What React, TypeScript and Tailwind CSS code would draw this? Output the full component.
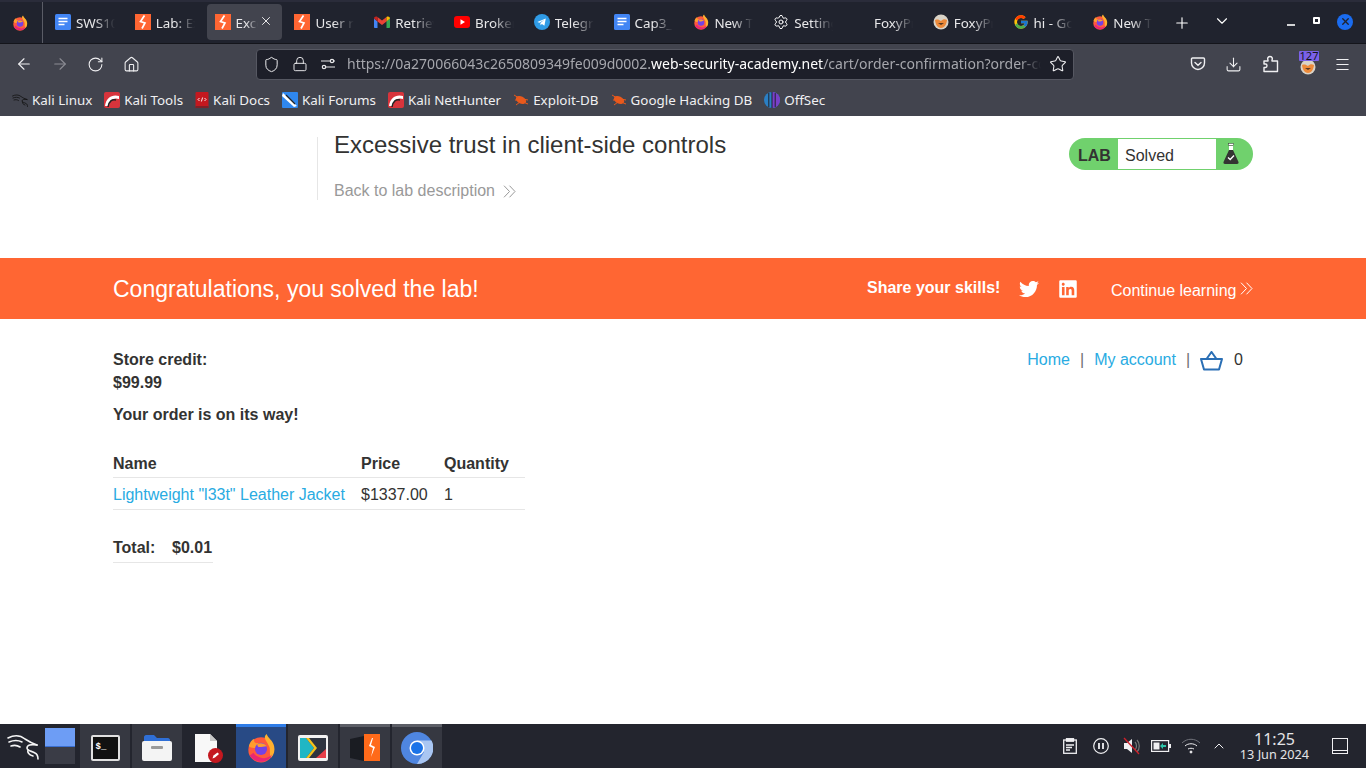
import React from "react";
import { ArrowLeft, ArrowRight, ChevronDown, ChevronUp, Download, House, Lock, Menu, Plus, RotateCw, Settings, Shield, Star, X } from "lucide-react";
import { FaLinkedin, FaTwitter } from "react-icons/fa";
import { FcGoogle } from "react-icons/fc";

function FirefoxLogo({ size = 16 }: { size?: number }) {
  return (
    <svg width={size} height={size} viewBox="0 0 32 32">
      <circle cx="16" cy="18" r="13.5" fill="#ff5a3c" />
      <path d="M22 1c1 4 7 7 8 13 1 4 0 9-3 12-3-3 0-9-3-13-1-3-4-6-4-8 0-2 1-3 2-4z" fill="#ffb02e" />
      <path d="M3 14c1-4 3-7 6-8-1 3 0 4 2 5 3-1 7 0 9 3-3 0-5 2-9 2-3 0-6 0-8-2z" fill="#ff9d2e" />
      <path d="M4 24c3 5 10 8 16 6 4-1 7-4 8-7-3 3-8 5-13 3-4-1-6-3-7-5l-4 3z" fill="#e31587" opacity="0.75" />
      <circle cx="16" cy="17" r="6.5" fill="#7542e5" />
      <path d="M12 12c3-2 8-1 10 2-3 0-5 1-8 1-1 0-2-1-2-3z" fill="#ff9d2e" />
    </svg>
  );
}

function DocIcon() {
  return (
    <svg width="16" height="16" viewBox="0 0 16 16">
      <rect width="16" height="16" rx="1.5" fill="#4285f4" />
      <path d="M3.5 4.5h9M3.5 7.5h9M3.5 10.5h6" stroke="#fff" strokeWidth="1.5" />
    </svg>
  );
}

function BurpIcon() {
  return (
    <svg width="16" height="16" viewBox="0 0 16 16">
      <rect width="16" height="16" fill="#ff6633" />
      <path d="M9.5 1.5 5.500 7.500 10 9 7 14.500" stroke="#fff" strokeWidth="1.700" fill="none" />
    </svg>
  );
}

function GmailIcon() {
  return (
    <svg width="16" height="14" viewBox="0 0 16 12">
      <path d="M0 2.5v8.5c0 .5.4 1 1 1h2.5V5.500z" fill="#4285f4" />
      <path d="M12.5 5.500V12H15c.6 0 1-.5 1-1V2.500z" fill="#34a853" />
      <path d="M3.500 5.500V1L8 4.500 12.500 1v4.500L8 9z" fill="#ea4335" />
      <path d="M0 2.500C0 .7 2 0 3.500 1v4.500z" fill="#c5221f" />
      <path d="M12.500 1C14 0 16 .7 16 2.500l-3.500 3z" fill="#fbbc04" />
    </svg>
  );
}

function YoutubeIcon() {
  return (
    <svg width="16" height="12" viewBox="0 0 16 12">
      <rect width="16" height="12" rx="3" fill="#f00" />
      <path d="M6.500 3.300v5.400L11 6z" fill="#fff" />
    </svg>
  );
}

function TelegramIcon() {
  return (
    <svg width="16" height="16" viewBox="0 0 16 16">
      <circle cx="8" cy="8" r="8" fill="#2f9be6" />
      <path d="M3.300 8 11.800 4.600 10.400 11.800 7.900 10l-1.300 1.300-.2-2.200 4-3.400-5 3z" fill="#fff" />
    </svg>
  );
}

function FoxyIcon({ size = 16 }: { size?: number }) {
  return (
    <svg width={size} height={size} viewBox="0 0 16 16">
      <circle cx="8" cy="8" r="7.500" fill="#d9d3c7" />
      <path d="M2 6c3-1 4 0 6 1 2-2 4-2 6-1-.5 5-3 8-6 8s-5.500-3-6-8z" fill="#ed8a3a" />
      <path d="M5 9h6l-3 2z" fill="#5a3a22" />
    </svg>
  );
}

function Tab({ icon, label, active }: { icon?: React.ReactNode; label: string; active?: boolean }) {
  return (
    <div className="w-[79.8px] shrink-0 h-full px-[2px] pt-[2px] pb-[3px]">
      <div className={"h-full pl-2 pr-[6px] flex items-center gap-[5px] rounded " + (active ? "bg-[#42444e]" : "")}>
        <span className="w-4 h-4 shrink-0 flex items-center justify-center">{icon}</span>
        <span className={"pt-[2px] overflow-hidden whitespace-nowrap text-[13.4px] text-[#e8e8ea] [mask-image:linear-gradient(to_right,#000_45%,transparent_95%)] " + (active ? "w-[23px] shrink-0" : "flex-1")}>
          {label}
        </span>
        {active && <X size={14} strokeWidth={1.5} className="text-white shrink-0 -ml-[5px] -mt-0.5" />}
      </div>
    </div>
  );
}

function TabBar() {
  return (
    <div className="h-11 bg-[#20232e] flex border-b border-[#14151b] border-t-2 border-t-[#2a2c3a]">
      <div className="w-[43px] h-full flex items-center justify-center pr-[2px] border-r border-[#5a5c66] shrink-0">
        <FirefoxLogo />
      </div>
      <div className="flex pl-[2px] h-full">
        <Tab icon={<DocIcon />} label="SWS10" />
        <Tab icon={<BurpIcon />} label="Lab: Exc" />
        <Tab icon={<BurpIcon />} label="Excessive" active />
        <Tab icon={<BurpIcon />} label="User role" />
        <Tab icon={<GmailIcon />} label="Retrieve" />
        <Tab icon={<YoutubeIcon />} label="Broken" />
        <Tab icon={<TelegramIcon />} label="Telegram" />
        <Tab icon={<DocIcon />} label="Cap3_" />
        <Tab icon={<FirefoxLogo />} label="New Tab" />
        <Tab icon={<Settings size={16} strokeWidth={1.5} className="text-white" />} label="Settings" />
        <Tab label="FoxyProxy" />
        <Tab icon={<FoxyIcon />} label="FoxyProxy" />
        <Tab icon={<FcGoogle size={16} />} label="hi - Google" />
        <Tab icon={<FirefoxLogo />} label="New Tab" />
      </div>
      <div className="flex items-center pl-[11px] text-white">
        <Plus size={18} strokeWidth={1.5} />
        <ChevronDown size={18} strokeWidth={1.5} className="ml-[22px] -mt-1" />
        <span className="h-[2px] bg-white/80 ml-[56px] mt-1 w-2" />
        <span className="w-[7px] h-[7px] border-2 border-white rounded-[1px] ml-[18px] -mt-1" />
        <span className="w-4 h-4 rounded-full bg-[#1a6cf0] ml-[17px] -mt-0.5 flex items-center justify-center">
          <X size={11} strokeWidth={3} className="text-[#20232e]" />
        </span>
      </div>
    </div>
  );
}

function PocketIcon() {
  return (
    <svg width="16" height="16" viewBox="0 0 16 16" fill="none" stroke="#f0f0f2" strokeWidth="1.400">
      <path d="M2.500 2h11c.6 0 1 .4 1 1v4c0 3.500-3 6.500-6.500 6.500S1.500 10.500 1.500 7V3c0-.6.4-1 1-1z" />
      <path d="M5 6.500 8 9.200l3-2.700" strokeLinecap="round" />
    </svg>
  );
}

function PuzzleIcon() {
  return (
    <svg width="16" height="18" viewBox="0 0 16 18" fill="none" stroke="#f0f0f2" strokeWidth="1.400" strokeLinejoin="round">
      <path d="M1 6h4V5c-1-2 .5-3.500 2-3.500S10 3 9 5v1h5.500v10.500H1v-4h1.500c2 0 2-3.500 0-3.500H1z" />
    </svg>
  );
}

function SliderIcon() {
  return (
    <svg width="16" height="16" viewBox="0 0 16 16" fill="none" stroke="#e8e8ea" strokeWidth="1.200">
      <circle cx="12" cy="5" r="1.700" />
      <circle cx="4" cy="11" r="1.700" />
      <path d="M1 5h9M14 5h1M6 11h9" />
    </svg>
  );
}

function NavBar() {
  return (
    <div className="h-10 bg-[#42444e] flex items-center text-[#f0f0f2]">
      <div className="w-[256px] flex items-center pl-[15px] shrink-0">
        <ArrowLeft size={18} strokeWidth={1.5} />
        <ArrowRight size={18} strokeWidth={1.5} className="ml-[18px] text-[#8b8c93]" />
        <RotateCw size={17} strokeWidth={1.5} className="ml-[18px]" />
        <House size={17} strokeWidth={1.5} className="ml-[19px]" />
      </div>
      <div className="w-[818px] h-[31px] shrink-0 bg-[#1d1f29] border border-[#565862] rounded flex items-center pl-[6px] pr-[6px]">
        <Shield size={17} strokeWidth={1.4} />
        <Lock size={16} strokeWidth={1.4} className="ml-[12px]" />
        <span className="ml-[12px] shrink-0"><SliderIcon /></span>
        <span className="ml-[11px] pb-[2px] flex-1 overflow-hidden whitespace-nowrap text-[14px] text-[#a6a7ad] [mask-image:linear-gradient(to_right,#000_97%,transparent_100%)]">
          https://0a270066043c2650809349fe009d0002.<span className="text-white">web-security-academy.net</span>/cart/order-confirmation?order-confirmed=true
        </span>
        <Star size={18} strokeWidth={1.4} className="ml-2 shrink-0" />
      </div>
      <div className="flex items-center ml-[116px]">
        <PocketIcon />
        <Download size={17} strokeWidth={1.5} className="ml-[19px]" />
        <span className="ml-[21px]"><PuzzleIcon /></span>
        <span className="ml-[21px] relative w-4 h-4 mt-[6px]">
          <FoxyIcon />
          <span className="absolute -top-[8px] -left-[1px] w-5 h-[10px] bg-[#7b61e8] rounded-[1px] text-[11px] leading-[10px] text-center text-[#14151b]">127</span>
        </span>
        <Menu size={17} strokeWidth={1.5} className="ml-[18px]" />
      </div>
    </div>
  );
}

function KaliMark({ size = 16, color = "#111" }: { size?: number; color?: string }) {
  return (
    <svg width={size} height={size} viewBox="0 0 32 32" fill="none" stroke={color} strokeWidth="1.600" strokeLinecap="round">
      <path d="M1 8C7 5 13 5 18 9c3 2 6 4 12 6" />
      <path d="M2 12c5-2 9-2 13 0M4 16c3-1 6-1 9 1" />
      <path d="M30 15c-6-1-10 0-10 3 0 3 5 3 8 5 2 1 3 3 3 6" />
      <path d="M21 20c-1 3 2 5 5 6" />
    </svg>
  );
}

function KaliTool() {
  return (
    <svg width="16" height="16" viewBox="0 0 16 16">
      <rect width="16" height="16" rx="2" fill="#d8343c" />
      <path d="M1 14C2 6 8 2 15 4v3C10 5 5 8 5 14z" fill="#fff" />
      <path d="M4 15C5 9 8 7 12 8" stroke="#222" strokeWidth="1.500" fill="none" />
    </svg>
  );
}

function KaliDocsIcon() {
  return (
    <svg width="14" height="16" viewBox="0 0 14 16">
      <rect width="13" height="16" x="0.500" rx="1" fill="#c4181f" />
      <rect width="13" height="2" x="0.500" y="14" fill="#7d2128" />
      <path d="M4.500 6 3 7.500 4.500 9M9.500 6 11 7.500 9.500 9M7.600 5.500 6.400 9.500" stroke="#fff" strokeWidth="0.900" fill="none" />
    </svg>
  );
}

function ForumsIcon() {
  return (
    <svg width="16" height="16" viewBox="0 0 16 16">
      <rect width="16" height="16" rx="1" fill="#2f87ee" />
      <path d="M1 1l14 13-3 1L0 4z" fill="#fff" />
      <path d="M4 3l9 9" stroke="#222" strokeWidth="1.200" />
    </svg>
  );
}

function BugIcon() {
  return (
    <svg width="16" height="14" viewBox="0 0 16 14">
      <ellipse cx="8" cy="7" rx="5.500" ry="3.500" fill="#e9591c" transform="rotate(25 8 7)" />
      <path d="M1 2l5 3M2 7h4M3 12l4-3M15 11l-5-2M15 7l-5-1" stroke="#e9591c" strokeWidth="1" />
    </svg>
  );
}

function OffSecIcon() {
  return (
    <svg width="16" height="16" viewBox="0 0 16 16">
      <circle cx="8" cy="8" r="8" fill="#2a7fc4" />
      <path d="M8 0a8 8 0 0 1 8 8 8 8 0 0 1-8 8z" fill="#7a3fc8" />
      <path d="M4.800 1v14M8 0v16M11.200 1v14" stroke="#20232e" strokeWidth="1" />
    </svg>
  );
}

function Bookmark({ icon, label }: { icon: React.ReactNode; label: string }) {
  return (
    <div className="flex items-center shrink-0 gap-1 text-[13.4px] text-[#f0f0f2]">
      <span className="flex items-center justify-center">{icon}</span>
      <span>{label}</span>
    </div>
  );
}

function Bookmarks() {
  return (
    <div className="h-8 bg-[#42444e] flex items-center pl-3 pt-[1px] gap-3">
      <Bookmark icon={<KaliMark />} label="Kali Linux" />
      <Bookmark icon={<KaliTool />} label="Kali Tools" />
      <Bookmark icon={<KaliDocsIcon />} label="Kali Docs" />
      <Bookmark icon={<ForumsIcon />} label="Kali Forums" />
      <Bookmark icon={<KaliTool />} label="Kali NetHunter" />
      <Bookmark icon={<BugIcon />} label="Exploit-DB" />
      <Bookmark icon={<BugIcon />} label="Google Hacking DB" />
      <Bookmark icon={<OffSecIcon />} label="OffSec" />
    </div>
  );
}

function Flask() {
  return (
    <svg width="16" height="22" viewBox="0 0 16 22">
      <rect x="5.500" y="0.500" width="5" height="2" fill="#fff" stroke="#333" strokeWidth="0.500" />
      <path d="M6 3h4v4l5.500 12c.3 1-.3 2-1.500 2H2c-1.200 0-1.800-1-1.500-2L6 7z" fill="#333332" />
      <path d="M6 3h4v4H6z" fill="#fff" />
      <path d="M5 14.500 7.200 16.500 11 12.500" stroke="#fff" strokeWidth="1.300" fill="none" />
    </svg>
  );
}

function DoubleChevron({ color, className }: { color: string; className?: string }) {
  return (
    <svg width="13" height="13" viewBox="0 0 13 13" fill="none" stroke={color} strokeWidth="1" className={className}>
      <path d="M1 .7l5.500 5.800L1 12.300M6.500 .7 12 6.500l-5.500 5.800" />
    </svg>
  );
}

function LabHeader() {
  return (
    <div className="h-[142px] bg-white flex pt-[21px]">
      <div className="ml-[317px] w-[500px] h-[63px] border-l border-[#e6e6e6] pl-4">
        <h2 className="text-[24px] leading-[16px] text-[#333332]">Excessive trust in client-side controls</h2>
        <div className="flex items-center mt-[27px] text-[#999] text-[16px] leading-[22px]">
          Back to lab description
          <DoubleChevron color="#999" className="ml-[8px]" />
        </div>
      </div>
      <div className="ml-[252px] w-[184px] h-8 mt-[1px] rounded-full bg-[#70d16d] flex items-center overflow-hidden">
        <span className="w-[49px] pl-[9px] pt-[4px] font-bold text-[16px] text-[#333332]">LAB</span>
        <span className="w-[98px] h-[30px] bg-white pl-[7px] text-[16px] leading-[34px] text-[#333332]">Solved</span>
        <span className="flex-1 flex justify-center pr-[8px]"><Flask /></span>
      </div>
    </div>
  );
}

function Banner() {
  return (
    <div className="h-[61px] bg-[#ff6633] flex items-center pl-[113px] text-white">
      <span className="text-[23px] w-[754px] mt-[2px]">Congratulations, you solved the lab!</span>
      <span className="font-bold text-[16px] w-[152px] -mt-[1px]">Share your skills!</span>
      <FaTwitter size={20} />
      <FaLinkedin size={20} className="ml-[19px]" />
      <span className="ml-[33px] text-[16px] mt-[5px]">Continue learning</span>
      <DoubleChevron color="#fff" className="ml-1" />
    </div>
  );
}

function Basket() {
  return (
    <svg width="23" height="20" viewBox="0 0 23 20" fill="none" stroke="#2a6fb5" strokeWidth="2" className="mt-[3px]">
      <path d="M1 8h21l-3 10.500H4z" strokeLinejoin="round" />
      <path d="M6.500 8 11.500 1l5 7" />
    </svg>
  );
}

function Content() {
  return (
    <div className="flex-1 bg-white px-[113px] pt-[29px] text-[16px] text-[#333332] leading-[23px] overflow-hidden">
      <div className="flex justify-between">
        <div className="font-bold">
          <div>Store credit:</div>
          <div>$99.99</div>
        </div>
        <div className="flex items-start mr-[10px] text-[#29abe2]">
          <span>Home</span>
          <span className="text-[#707070] mx-[10px]">|</span>
          <span>My account</span>
          <span className="text-[#707070] mx-[10px]">|</span>
          <Basket />
          <span className="text-[#333332] ml-[11px]">0</span>
        </div>
      </div>
      <div className="font-bold mt-[9px]">Your order is on its way!</div>
      <table className="mt-[24px] w-[412px] border-collapse text-left">
        <thead>
          <tr className="border-b border-[#e6e6e6] h-[27px]">
            <th className="w-[248px] font-bold">Name</th>
            <th className="w-[83px] font-bold">Price</th>
            <th className="font-bold">Quantity</th>
          </tr>
        </thead>
        <tbody>
          <tr className="border-b border-[#e6e6e6] h-[32px]">
            <td className="text-[#29abe2] pt-[2px]">Lightweight "l33t" Leather Jacket</td>
            <td className="pt-[2px]">$1337.00</td>
            <td className="pt-[2px]">1</td>
          </tr>
        </tbody>
      </table>
      <div className="mt-[26px] w-[100px] h-[27px] border-b border-[#e6e6e6] font-bold flex">
        <span className="w-[59px]">Total:</span>
        <span>$0.01</span>
      </div>
    </div>
  );
}

function TaskItem({ children, tone }: { children: React.ReactNode; tone: "plain" | "idle" | "active" | "open" }) {
  const cls =
    tone === "active"
      ? "bg-[#284a85] border-t-[3px] border-[#2f7de8]"
      : tone === "open"
        ? "bg-[#363841] border-t-[3px] border-[#5c5e66]"
        : tone === "idle"
          ? "bg-[#363841] border-t-[3px] border-[#363841]"
          : "border-t-[3px] border-transparent";
  return <div className={"w-[50px] h-full flex items-center justify-center shrink-0 " + cls}>{children}</div>;
}

function Taskbar() {
  return (
    <div className="h-11 bg-[#23252e] flex items-stretch shrink-0">
      <div className="w-[45px] flex items-center justify-center">
        <KaliMark size={32} color="#f4f4f4" />
      </div>
      <div className="w-[30px] flex flex-col py-1 shrink-0 mr-[5px]">
        <div className="flex-1 bg-[#6d9df5] border-b border-[#3a6fd0]" />
        <div className="flex-1 bg-[#3a3c46]" />
      </div>
      <div className="flex gap-[2px]">
        <TaskItem tone="idle">
          <div className="w-[29px] h-[26px] bg-[#111] border-2 border-[#e0e0e0] rounded-[2px] text-white text-[9px] font-bold font-['Liberation_Mono',monospace] pl-[3px] leading-[20px]">$_</div>
        </TaskItem>
        <TaskItem tone="idle">
          <svg width="30" height="28" viewBox="0 0 30 28">
            <path d="M2 3c0-1 1-2 2-2h8l3 3h11c1 0 2 1 2 2v4H2z" fill="#2f6fd6" />
            <rect x="0" y="7" width="30" height="20" rx="2" fill="#f4f4f4" />
            <rect x="9" y="12" width="12" height="3" rx="1" fill="#9a9a9a" />
          </svg>
        </TaskItem>
        <TaskItem tone="plain">
          <svg width="28" height="30" viewBox="0 0 28 30">
            <path d="M0 1h15l7 7v21H0z" fill="#f8f8f8" />
            <path d="M15 1l7 7h-7z" fill="#c8c8c8" />
            <circle cx="20.500" cy="22.500" r="7.500" fill="#c4181f" />
            <path d="M17.500 25.500l1-3 4-3 1.500 1.500-4 3.500z" fill="#fff" />
          </svg>
        </TaskItem>
        <TaskItem tone="active"><FirefoxLogo size={30} /></TaskItem>
        <TaskItem tone="idle">
          <svg width="30" height="26" viewBox="0 0 30 26">
            <rect width="30" height="26" rx="2" fill="#f2f2f2" />
            <rect x="2" y="3" width="26" height="20" fill="#2e3440" />
            <path d="M2 3h6l8 10-8 10H2z" fill="#20b6c4" />
            <path d="M8 3h3l8 10-8 10H8l8-10z" fill="#f5c21b" />
            <path d="M28 14v9H18z" fill="#e8404a" />
          </svg>
        </TaskItem>
        <TaskItem tone="open">
          <svg width="30" height="28" viewBox="0 0 30 28">
            <path d="M0 5l14-3v25L0 24z" fill="#1a1c22" />
            <path d="M14 0h16v27H14z" fill="#ff6a1a" />
            <path d="M22 4l-3 8 4 2-2 9 4-10-4-2 2-7z" fill="#fff" />
          </svg>
        </TaskItem>
        <TaskItem tone="open">
          <svg width="32" height="32" viewBox="0 0 32 32">
            <circle cx="16" cy="16" r="16" fill="#4f86e0" />
            <path d="M16 8.500h14.500A16 16 0 0 1 16 32l7-12z" fill="#a9c6f2" />
            <circle cx="16" cy="16" r="7.500" fill="#fff" />
            <circle cx="16" cy="16" r="6" fill="#1a73e8" />
          </svg>
        </TaskItem>
      </div>
      <div className="flex-1 flex items-center justify-end text-[#f0f0f2]">
        <svg width="14" height="16" viewBox="0 0 14 16" fill="none" stroke="#f0f0f2" strokeWidth="1.300" className="mr-[16px]">
          <rect x="0.700" y="2" width="12.600" height="13.300" />
          <rect x="3.500" y="0.700" width="7" height="2.500" fill="#f0f0f2" />
          <path d="M3 7h8M3 9.500h6M3 12h4" />
        </svg>
        <svg width="16" height="16" viewBox="0 0 16 16" fill="none" stroke="#f0f0f2" strokeWidth="1.200" className="mr-[14px]">
          <circle cx="8" cy="8" r="7.300" />
          <path d="M6 5v6M10 5v6" strokeWidth="1.800" />
        </svg>
        <svg width="18" height="18" viewBox="0 0 18 18" fill="none" className="mr-[10px]">
          <path d="M1 6h3l5-4v14l-5-4H1z" fill="#f0f0f2" />
          <path d="M12 5c2 2 2 6 0 8M14 3c3 3 3 9 0 12" stroke="#777" strokeWidth="1.200" />
          <path d="M1 1l15 16" stroke="#d0202a" strokeWidth="1.300" />
        </svg>
        <svg width="20" height="12" viewBox="0 0 20 12" fill="none" className="mr-[10px]">
          <rect x="0.600" y="0.600" width="17" height="10.800" stroke="#f0f0f2" strokeWidth="1.200" />
          <rect x="18" y="4" width="2" height="4" fill="#f0f0f2" />
          <rect x="2.500" y="2.500" width="6" height="7" fill="#f0f0f2" />
          <path d="M9 6l3-3v2h3v2h-3v2z" fill="#2bc4a8" />
        </svg>
        <svg width="20" height="16" viewBox="0 0 20 16" fill="none" stroke="#f0f0f2" className="mr-[10px]">
          <path d="M1 5c5-5 13-5 18 0" stroke="#70727a" />
          <path d="M4 8c3-3 9-3 12 0" />
          <path d="M7 11c2-1 4-1 6 0" />
          <circle cx="10" cy="14" r="1" fill="#f0f0f2" />
        </svg>
        <ChevronUp size={16} strokeWidth={1.5} className="mr-[12px]" />
        <div className="w-[71px] flex flex-col items-center mr-[22px] text-[#e4e4e6]">
          <span className="text-[16px] leading-[15px] pt-[1px] whitespace-nowrap">11:25</span>
          <span className="text-[12.7px] leading-[14px] whitespace-nowrap">13 Jun 2024</span>
        </div>
        <div className="w-4 h-4 border border-[#f0f0f2] flex items-end mr-[18px]">
          <div className="w-full h-[1px] bg-[#f0f0f2] mb-[2px]" />
        </div>
      </div>
    </div>
  );
}

export default function App() {
  return (
    <div className="w-[1366px] h-[768px] flex flex-col overflow-hidden bg-white font-['Liberation_Sans',Arial,sans-serif]">
      <div className="font-['Noto_Sans',sans-serif] shrink-0">
        <TabBar />
        <NavBar />
        <Bookmarks />
      </div>
      <LabHeader />
      <Banner />
      <Content />
      <div className="font-['Noto_Sans',sans-serif] shrink-0">
        <Taskbar />
      </div>
    </div>
  );
}
